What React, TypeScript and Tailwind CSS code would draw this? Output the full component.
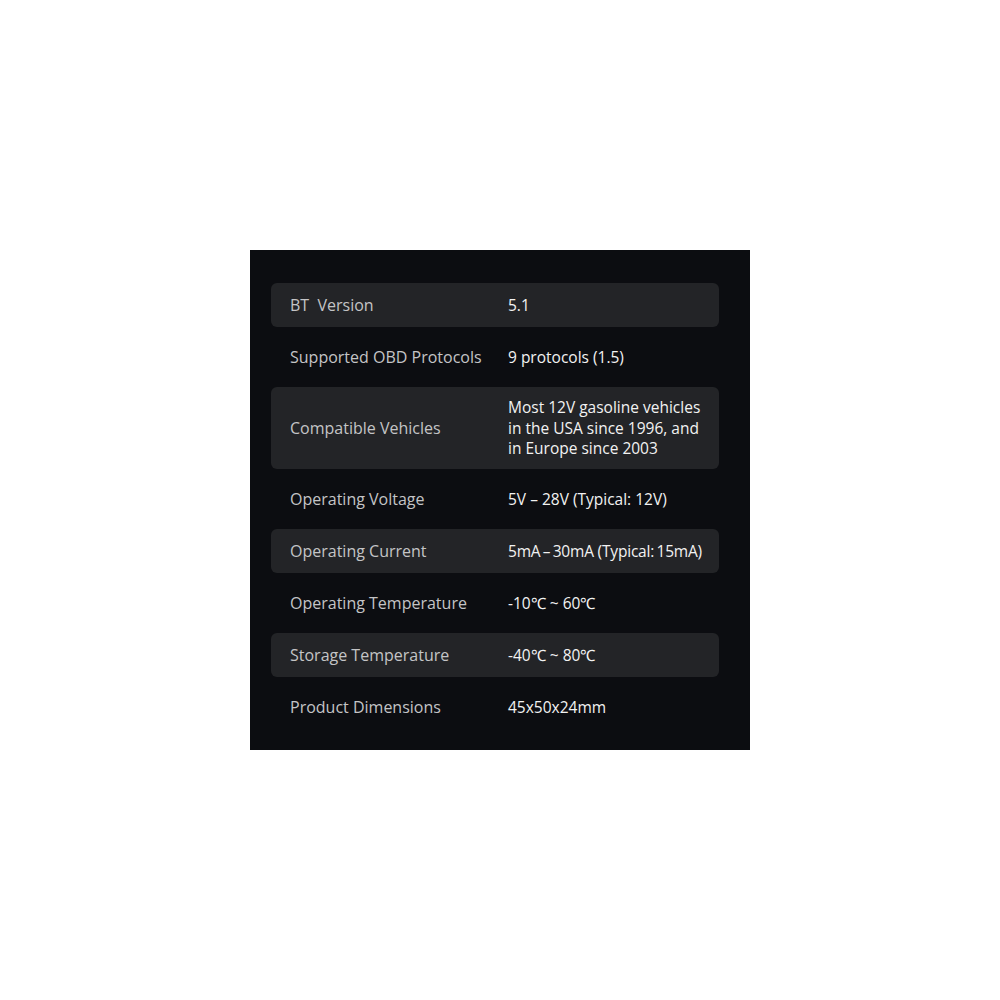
const specs = [
  { label: "BT  Version", value: "5.1" },
  { label: "Supported OBD Protocols", value: "9 protocols (1.5)" },
  {
    label: "Compatible Vehicles",
    value: "Most 12V gasoline vehicles in the USA since 1996, and in Europe since 2003",
    tall: true,
  },
  { label: "Operating Voltage", value: "5V – 28V (Typical: 12V)" },
  { label: "Operating Current", value: "5mA\u2009–\u200930mA (Typical:\u200915mA)", tight: true },
  { label: "Operating Temperature", value: "-10℃ ~ 60℃" },
  { label: "Storage Temperature", value: "-40℃ ~ 80℃" },
  { label: "Product Dimensions", value: "45x50x24mm" },
]

export default function App() {
  return (
    <div className="min-h-screen w-full bg-white flex items-center justify-center">
      <div
        className="w-[500px] h-[500px] bg-[#0c0d11] pt-[33px] pl-[21px] pr-[31px] flex flex-col gap-[8px]"
        style={{ fontFamily: '"Open Sans", "Liberation Sans", sans-serif' }}
      >
        {specs.map((s, i) => (
          <div
            key={i}
            className={`flex items-center rounded-md pl-[19px] pr-[12px] ${
              s.tall ? "h-[82px]" : "h-[44px]"
            } ${i % 2 === 0 ? "bg-[#232427]" : ""}`}
          >
            <div className="w-[218px] shrink-0 text-[16px] text-[#c4c4c6] whitespace-pre">{s.label}</div>
            <div
              className={`flex-1 text-[15.5px] leading-[20.5px] text-[#f2f2f2] ${
                s.tight ? "whitespace-nowrap tracking-[-0.2px]" : ""
              }`}
            >
              {s.value}
            </div>
          </div>
        ))}
      </div>
    </div>
  )
}
